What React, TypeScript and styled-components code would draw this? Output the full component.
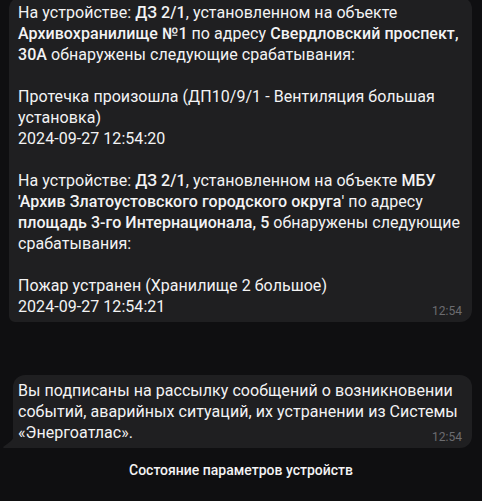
import React from "react";
import styled, { createGlobalStyle } from "styled-components";

const Global = createGlobalStyle`
  html, body { margin: 0; padding: 0; background: #0f0f11; }
  body { font-family: Roboto, "Noto Sans", "Liberation Sans", sans-serif; }
  * { box-sizing: border-box; }
`;

const Screen = styled.div`
  width: 482px;
  height: 501px;
  overflow: hidden;
  display: flex;
  flex-direction: column;
  background: #0f0f11;
`;

const Chat = styled.div`
  flex: 1;
  min-height: 0;
  display: flex;
  flex-direction: column;
  justify-content: flex-end;
  gap: 53px;
  padding: 0 10px 2px 9px;
`;

const Bubble = styled.div<{ $tail?: boolean }>`
  position: relative;
  display: grid;
  grid-template-areas: "content";
  background: #1f1f21;
  border-radius: ${(p) => (p.$tail ? "12px 12px 12px 0" : "12px 12px 12px 6px")};
  margin-left: ${(p) => (p.$tail ? "4px" : "0")};
  padding: 5px 10px 5px ${(p) => (p.$tail ? "5px" : "9px")};
  flex-shrink: 0;
`;

const Text = styled.div`
  grid-area: content;
  color: #f3f3f4;
  font-size: 16px;
  line-height: 21px;
  letter-spacing: 0.05px;
  b { font-weight: 500; }
`;

const Para = styled.p`
  margin: 0 0 21px 0;
  &:last-child { margin-bottom: 0; }
`;

const Time = styled.span`
  grid-area: content;
  align-self: end;
  justify-self: end;
  color: #6c6c70;
  font-size: 12px;
  line-height: 14px;
  margin-bottom: -1px;
`;

const Tail = styled.svg`
  position: absolute;
  left: -10px;
  bottom: 0;
  width: 11px;
  height: 12px;
`;

const Footer = styled.div`
  height: 51px;
  flex-shrink: 0;
  display: flex;
  justify-content: center;
  padding-top: 10px;
  color: #f3f3f4;
  font-size: 14px;
  line-height: 20px;
  font-weight: 500;
`;

export default function App() {
  return (
    <>
      <Global />
      <Screen>
        <Chat>
          <Bubble>
            <Text>
              <Para>
                На устройстве: <b>ДЗ 2/1</b>, установленном на объекте <b>Архивохранилище №1</b> по адресу{" "}
                <b>Свердловский проспект, 30А</b> обнаружены следующие срабатывания:
              </Para>
              <Para>
                Протечка произошла (ДП10/9/1 - Вентиляция большая установка)
                <br />
                2024-09-27 12:54:20
              </Para>
              <Para>
                На устройстве: <b>ДЗ 2/1</b>, установленном на объекте <b>МБУ 'Архив Златоустовского городского округа</b>' по адресу{" "}
                <b>площадь 3-го Интернационала, 5</b> обнаружены следующие срабатывания:
              </Para>
              <Para>
                Пожар устранен (Хранилище 2 большое)
                <br />
                2024-09-27 12:54:21
              </Para>
            </Text>
            <Time>12:54</Time>
          </Bubble>
          <Bubble $tail>
            <Tail viewBox="0 0 11 12">
              <path d="M11 0 L11 12 L1 12 C0 12 0 11 1 10.2 C6 7 10 4 11 0 Z" fill="#1f1f21" />
            </Tail>
            <Text>
              <Para>
                Вы подписаны на рассылку сообщений о возникновении событий, аварийных ситуаций, их устранении из Системы «Энергоатлас».
              </Para>
            </Text>
            <Time>12:54</Time>
          </Bubble>
        </Chat>
        <Footer>Состояние параметров устройств</Footer>
      </Screen>
    </>
  );
}
